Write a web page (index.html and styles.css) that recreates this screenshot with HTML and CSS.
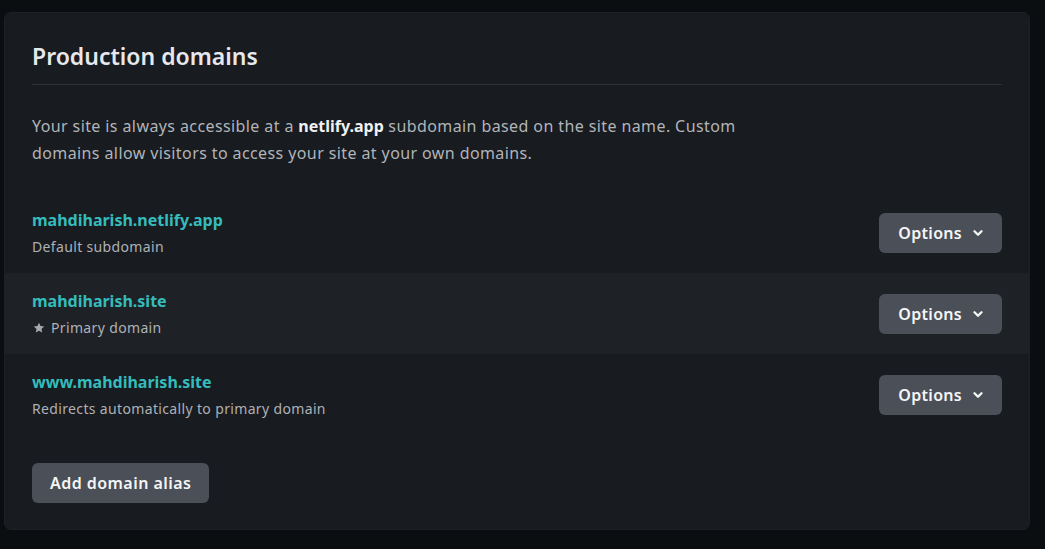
FILE: index.html
```html
<!DOCTYPE html>
<html>
<head>
<meta charset="utf-8">
<link rel="stylesheet" href="styles.css">
</head>
<body>
<section class="card">
  <header class="card-header">
    <h2 class="title">Production domains</h2>
  </header>
  <p class="intro">Your site is always accessible at a <strong>netlify.app</strong> subdomain based on the site name. Custom domains allow visitors to access your site at your own domains.</p>
  <ul class="domains">
    <li class="domain">
      <div class="info">
        <a class="name">mahdiharish.netlify.app</a>
        <span class="sub">Default subdomain</span>
      </div>
      <button class="btn">Options <svg class="chev" viewBox="0 0 10 10" width="10" height="10"><path d="M1.5 3.2 L5 6.7 L8.5 3.2" fill="none" stroke="currentColor" stroke-width="2.3" stroke-linecap="round" stroke-linejoin="round"/></svg></button>
    </li>
    <li class="domain alt">
      <div class="info">
        <a class="name">mahdiharish.site</a>
        <span class="sub"><svg class="star" viewBox="0 0 24 24" width="12" height="12"><path d="M12 1.5l3.1 6.7 7.3.8-5.5 4.9 1.6 7.2L12 17.4l-6.5 3.7 1.6-7.2L1.6 9l7.3-.8z" fill="currentColor"/></svg>Primary domain</span>
      </div>
      <button class="btn">Options <svg class="chev" viewBox="0 0 10 10" width="10" height="10"><path d="M1.5 3.2 L5 6.7 L8.5 3.2" fill="none" stroke="currentColor" stroke-width="2.3" stroke-linecap="round" stroke-linejoin="round"/></svg></button>
    </li>
    <li class="domain">
      <div class="info">
        <a class="name">www.mahdiharish.site</a>
        <span class="sub">Redirects automatically to primary domain</span>
      </div>
      <button class="btn">Options <svg class="chev" viewBox="0 0 10 10" width="10" height="10"><path d="M1.5 3.2 L5 6.7 L8.5 3.2" fill="none" stroke="currentColor" stroke-width="2.3" stroke-linecap="round" stroke-linejoin="round"/></svg></button>
    </li>
  </ul>
  <div class="actions">
    <button class="btn wide">Add domain alias</button>
  </div>
</section>
</body>
</html>
```
FILE: styles.css
```css
* { box-sizing: border-box; }
html, body {
  margin: 0;
  background: #0b0e11;
  height: 100%;
}
body {
  padding: 12px 15px 0 4px;
  font-family: "Noto Sans", "Open Sans", sans-serif;
  color: #e4e6e9;
}
.card {
  background: #181b1f;
  border: 1px solid #1d2125;
  border-radius: 7px;
  padding: 27px 0 26px;
  height: 518px;
}
.card-header {
  margin: 0 27px;
  padding-bottom: 11px;
  border-bottom: 1px solid #2d3136;
}
.title {
  margin: 0;
  font-size: 23px;
  line-height: 33px;
  font-weight: 600;
  color: #e6e8eb;
  letter-spacing: 0;
}
.intro {
  margin: 28px 27px 25px;
  max-width: 760px;
  font-size: 16px;
  line-height: 27px;
  color: #b1b4b9;
  letter-spacing: 0.4px;
}
.intro strong { color: #f0f1f3; font-weight: 700; letter-spacing: 0; }
.domains {
  list-style: none;
  margin: 0;
  padding: 0;
}
.domain {
  display: flex;
  align-items: center;
  justify-content: space-between;
  padding: 16px 27px;
  height: 81px;
}
.domain.alt { background: #1e2226; }
.info { display: flex; flex-direction: column; }
.name {
  font-size: 16px;
  line-height: 24px;
  font-weight: 700;
  color: #35bcbc;
  letter-spacing: 0;
}
.sub {
  margin-top: 5px;
  font-size: 14px;
  line-height: 20px;
  color: #aeb1b6;
  letter-spacing: 0.35px;
  display: flex;
  align-items: center;
  gap: 6px;
}
.star { color: #a6a9ae; margin-left: 1px; }
.btn {
  display: inline-flex;
  align-items: center;
  gap: 11px;
  height: 40px;
  padding: 0 19px 0 19px;
  border: 0;
  border-radius: 6px;
  background: #4b5058;
  color: #f4f5f6;
  font-family: inherit;
  font-size: 16px;
  font-weight: 600;
  letter-spacing: 0.3px;
}
.btn.wide { padding: 0 18px; letter-spacing: 0.45px; }
.chev { margin-top: 1px; }
.actions {
  margin: 28px 27px 0;
}
```
